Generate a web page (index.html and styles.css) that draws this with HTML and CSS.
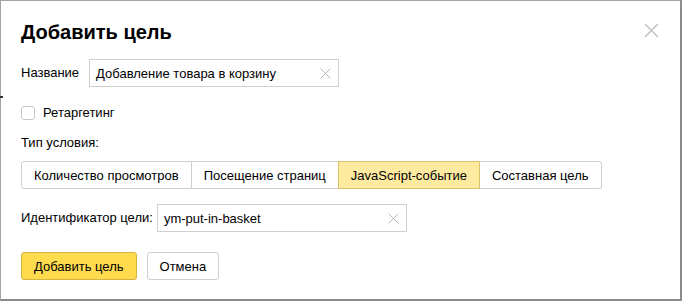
FILE: index.html
```html
<!DOCTYPE html>
<html lang="ru">
<head>
<meta charset="utf-8">
<title>Добавить цель</title>
<link rel="stylesheet" href="styles.css">
</head>
<body>
<div class="dialog">
  <span class="edge-mark"></span>
  <button class="close" aria-label="Закрыть">
    <svg width="15" height="15" viewBox="0 0 15 15"><path d="M1 1L14 14M14 1L1 14" stroke="#c4c4c4" stroke-width="1.6" fill="none"/></svg>
  </button>
  <h1 class="title">Добавить цель</h1>

  <div class="row name-row">
    <span class="label">Название</span>
    <div class="input input-name">
      <span class="input-text">Добавление товара в корзину</span>
      <svg class="clear" width="11" height="11" viewBox="0 0 11 11"><path d="M0.5 0.5L10.5 10.5M10.5 0.5L0.5 10.5" stroke="#b8b8b8" stroke-width="1" fill="none"/></svg>
    </div>
  </div>

  <label class="row check-row">
    <span class="checkbox"></span>
    <span class="check-label">Ретаргетинг</span>
  </label>

  <div class="type-label">Тип условия:</div>

  <div class="segments">
    <span class="seg seg-first">Количество просмотров</span>
    <span class="seg">Посещение страниц</span>
    <span class="seg seg-active">JavaScript-событие</span>
    <span class="seg seg-last">Составная цель</span>
  </div>

  <div class="row id-row">
    <span class="label">Идентификатор цели:</span>
    <div class="input input-id">
      <span class="input-text">ym-put-in-basket</span>
      <svg class="clear" width="11" height="11" viewBox="0 0 11 11"><path d="M0.5 0.5L10.5 10.5M10.5 0.5L0.5 10.5" stroke="#b8b8b8" stroke-width="1" fill="none"/></svg>
    </div>
  </div>

  <div class="actions">
    <button class="btn btn-primary">Добавить цель</button>
    <button class="btn btn-plain">Отмена</button>
  </div>
</div>
</body>
</html>
```

FILE: styles.css
```css
* { box-sizing: border-box; }
html, body { margin: 0; padding: 0; background: #fff; }
body {
  font-family: "Liberation Sans", Arial, sans-serif;
  font-size: 13px;
  color: #000;
}
.dialog {
  position: relative;
  width: 682px;
  height: 301px;
  border: 1px solid #a3a3a3;
  border-right: 2px solid #8c8c8c;
  border-bottom: 2px solid #8c8c8c;
  padding: 18px 20px 0;
  display: flex;
  flex-direction: column;
  align-items: flex-start;
}
.edge-mark {
  position: absolute;
  left: -1px;
  top: 95px;
  width: 3px;
  height: 2px;
  background: #333;
}
.close {
  position: absolute;
  top: 22px;
  right: 21px;
  width: 15px;
  height: 15px;
  padding: 0;
  border: 0;
  background: none;
  display: flex;
}
.title {
  margin: 0;
  font-size: 20px;
  line-height: 26px;
  font-weight: bold;
}
.row {
  display: flex;
  align-items: center;
}
.name-row { margin-top: 14px; gap: 10px; }
.label { line-height: 16px; }
.input {
  height: 28px;
  width: 250px;
  border: 1px solid #d0d0d0;
  display: flex;
  align-items: center;
  justify-content: space-between;
  padding: 0 7px 0 6px;
}
.input-name { width: 250px; }
.clear { flex: none; }
.check-row { margin-top: 19px; gap: 8px; height: 14px; }
.checkbox {
  width: 14px;
  height: 14px;
  border: 1px solid #c8c8c8;
  border-radius: 3px;
}
.check-label { line-height: 14px; }
.type-label { margin-top: 15px; line-height: 16px; }
.segments {
  margin-top: 10px;
  display: flex;
  height: 28px;
}
.seg {
  display: flex;
  align-items: center;
  padding: 0 12px;
  border: 1px solid #d0d0d0;
  border-left: 0;
  background: #fff;
}
.seg-first { border-left: 1px solid #d0d0d0; border-radius: 3px 0 0 3px; padding-left: 12px; }
.seg-last { border-radius: 0 3px 3px 0; }
.seg-active {
  background: #ffeba0;
  border-color: #dcc06a;
  border-left: 1px solid #dcc06a;
  margin-left: -1px;
}
.id-row { margin-top: 15px; gap: 4px; }
.input-id { width: 250px; }
.actions {
  margin-top: 20px;
  display: flex;
  gap: 10px;
}
.btn {
  font-family: inherit;
  font-size: 13px;
  color: #000;
  height: 28px;
  padding: 0 12px;
  border-radius: 3px;
  cursor: pointer;
}
.btn-primary {
  background: #ffdb4d;
  border: 1px solid #d3b43e;
}
.btn-plain {
  background: #fff;
  border: 1px solid #cfcfcf;
}
```
